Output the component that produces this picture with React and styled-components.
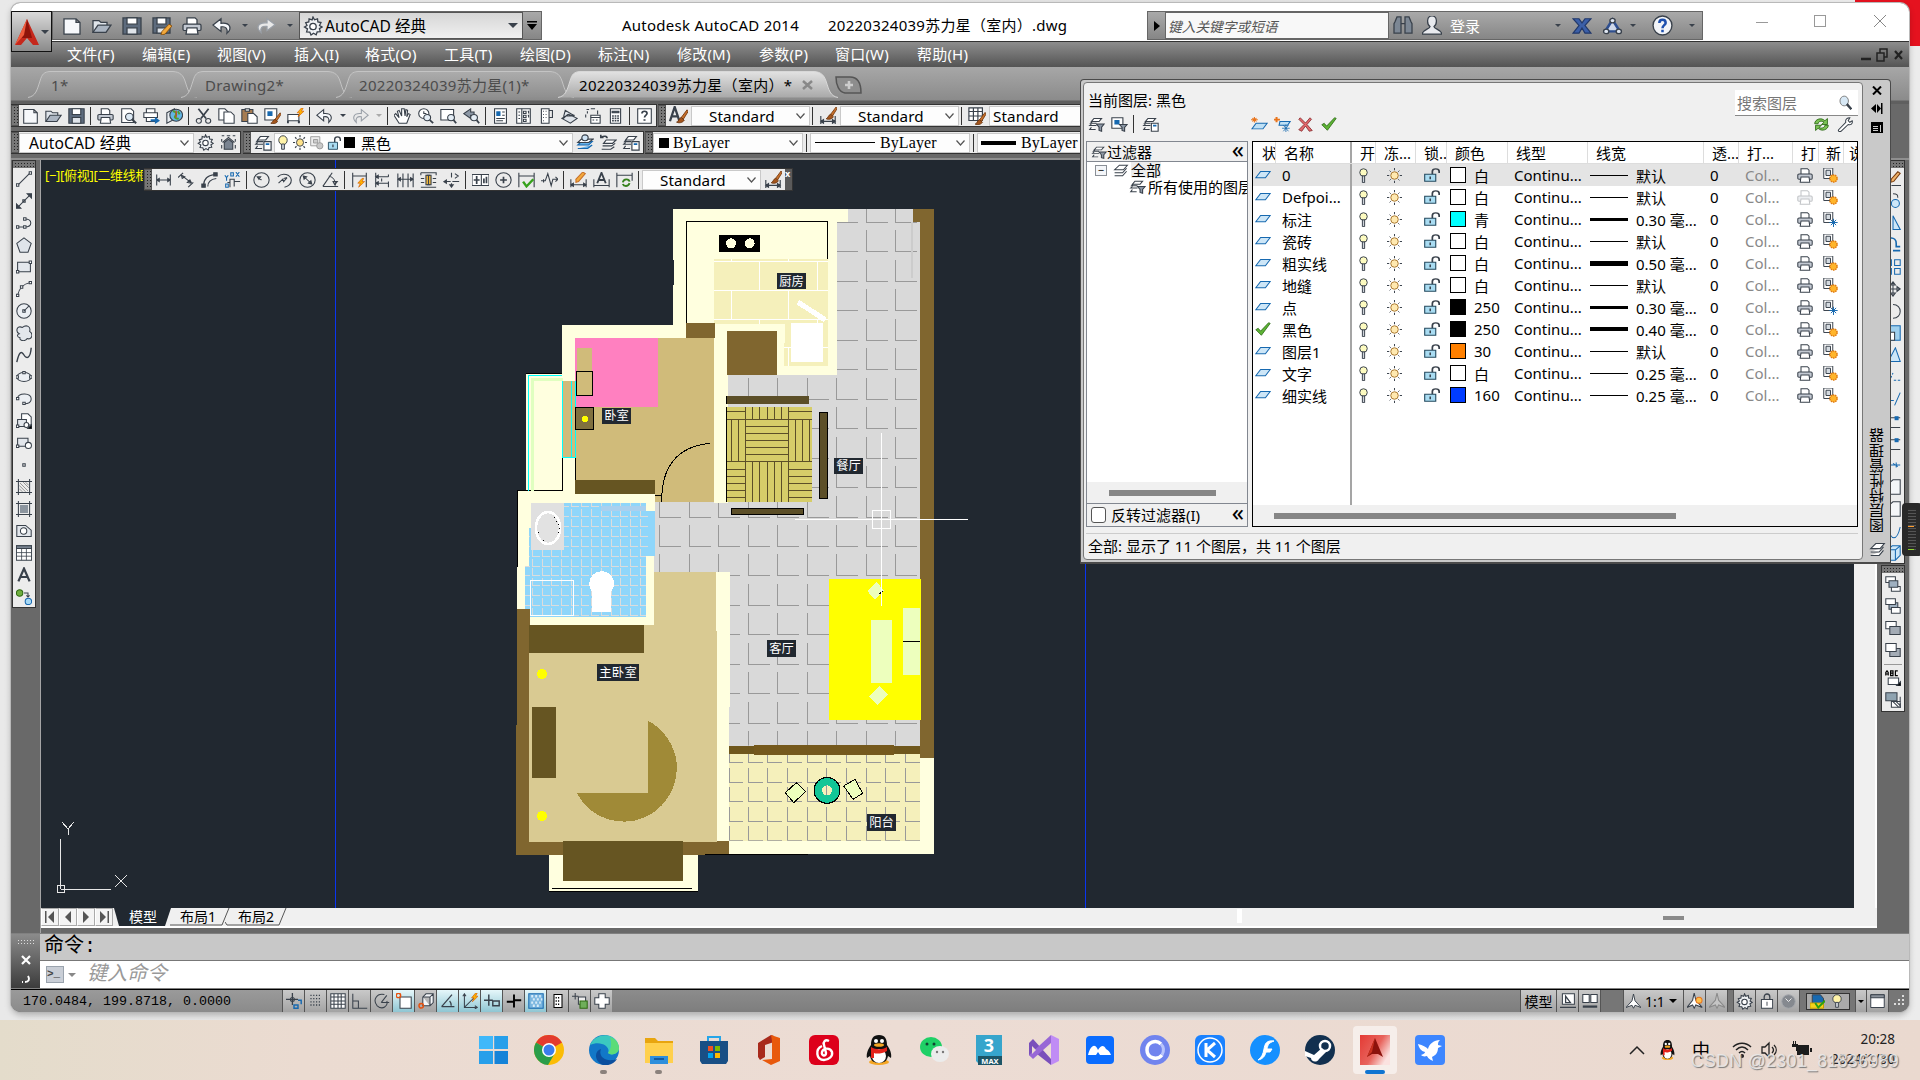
import React from 'react';
import styled, { createGlobalStyle, css } from 'styled-components';

const UI = '"Noto Sans","Noto Sans CJK SC",sans-serif';
const MONO = '"Liberation Mono","Noto Sans CJK SC",monospace';
const K = '#39414b';
const B = '#1769b0';

const Global = createGlobalStyle`
  * { box-sizing: border-box; }
  html, body { margin: 0; padding: 0; overflow: hidden; }
  body { font-family: ${UI}; font-size: 15px; color: #000; }
`;

/* ---------- icons ---------- */
const layersShape = (
  <>
    <path d="M7 3h9l-3 4H4zM4 10l-2 2h8M4 14l-2 3h7M5 7l-2 2h7" fill="#fff" />
  </>
);
const printer = (
  <>
    <path d="M5 8V1h8l2 2v5" fill="#fff" />
    <rect x="1" y="8" width="18" height="7" rx="1.5" fill="#c3c9d2" />
    <path d="M5 12h10l1 7H4z" fill="#fff" />
  </>
);
const dimTicks = <path d="M2 3v14M18 3v14M2 10h16M2 10l3-2v4zM18 10l-3-2v4z" />;
const brush = (
  <>
    <path d="M18 1l-6 8 2 2 5-8z" fill="#c8702a" stroke="#7a3e12" strokeWidth="1" />
    <path d="M12 9l3 3c-2 3-6 3-8 2 2 0 2-4 5-5z" fill="#a4551c" stroke="#6a3510" strokeWidth="1" />
  </>
);
const bolt = <path d="M13 1l-5 6h3l-2 5 7-7h-3l2-4z" fill="#ffb400" stroke="#d55b00" strokeWidth=".8" />;

const ICONS = {
  new: <path d="M2 2h12l4 4v13H2zM14 2v4h4" fill="#f6f8fb" />,
  open: <><path d="M1 17V4h6l2 2h6v4" fill="#dfe4ea" /><path d="M1 17l5-8h13l-5 8z" fill="#aab4c1" /></>,
  save: <><path d="M1 1h18v18H1z" fill="#5d6b7d" /><path d="M5 1h10v7H5z" fill="#fff" /><path d="M5 12h10v7H5z" fill="#dfe4ea" /></>,
  saveas: <><path d="M1 1h17v17H1z" fill="#5d6b7d" /><path d="M5 1h9v7H5z" fill="#fff" /><path d="M5 12h9v6H5z" fill="#dfe4ea" /><path d="M17 8l3 2-7 9-4 1 1-4z" fill="#f3a93b" stroke="#8a5312" strokeWidth="1" /></>,
  print: printer,
  preview: <><path d="M2 1h11l3 3v14H2z" fill="#fff" /><circle cx="11" cy="11" r="4.5" fill="#dce9f4" /><path d="M14 14l5 5" strokeWidth="2.4" /></>,
  publish: <><path d="M4 6V1h10v5M1 6h16v6H1zM4 12h11v5H4z" fill="#fff" /><path d="M9 14h5v-3l6 5-6 4v-3H9z" fill={B} stroke="none" /></>,
  globe: <><path d="M1 6l9-5v13l-9 5z" fill="#e9edf1" /><circle cx="12" cy="9" r="7.500" fill="#64b5e4" /><path d="M8 4c4 0 5 4 3 6s2 4 4 3M14 4l2 4" stroke="#4fa02f" strokeWidth="2.4" /><path d="M12 3v9" stroke="#d83b2a" /></>,
  cut: <><path d="M4 1l9 12M16 1L7 13" strokeWidth="2" /><circle cx="4.500" cy="16" r="3" /><circle cx="15.500" cy="16" r="3" /></>,
  copy: <><path d="M1 1h7l4 4v10H1z" fill="#fff" /><path d="M7 5h8l4 4v10H7z" fill="#fff" /></>,
  paste: <><path d="M1 2h13v15H1z" fill="#a67c52" /><path d="M5 1h5v3H5z" fill="#ddd" /><path d="M8 7h7l4 4v8H8z" fill="#fff" /></>,
  match: <><path d="M1 1h14v14H1z" fill="#fff" /><path d="M4 4h6v6H4z" fill={B} stroke="none" /><g transform="translate(1 5)">{brush}</g></>,
  blockedit: <><path d="M1 8h13v8H1z" fill="#fff" /><path d="M1 16v3M14 16v3" strokeWidth="2.4" /><g transform="translate(4 -1)">{bolt}</g></>,
  undo: <path d="M9 2L1 9l8 7v-5c5-1 7 2 6 7 5-5 4-12-6-11z" fill="#f6f8fb" />,
  redo: <path d="M11 2l8 7-8 7v-5c-5-1-7 2-6 7-5-5-4-12 6-11z" fill="#e9e9e9" stroke="#9aa0a8" />,
  hand: <path d="M6 12L2 7l-2 2 6 10h9l4-11-2-1-2 4 1-8-2-1-1 8-1-9H9v9L6 3 4 4z" fill="#fff" />,
  zoomrt: <><circle cx="8" cy="7" r="6" fill="#fff" /><path d="M8 4v3h3" /><circle cx="12" cy="12" r="4" fill="#e5eef6" /><path d="M15 15l4 4" strokeWidth="2.2" /></>,
  zoomwin: <><path d="M1 2h15v13H1z" fill="#fff" /><circle cx="13" cy="12" r="4" fill="#e5eef6" /><path d="M16 15l3 4" strokeWidth="2.2" /></>,
  zoomprev: <><path d="M9 1L1 7l8 6V9c3 0 4 1 4 1V5H9z" fill="#8d98a6" /><circle cx="13" cy="12" r="4" fill="#e5eef6" /><path d="M16 15l3 4" strokeWidth="2.2" /></>,
  props: <><path d="M3 1h14v18H3z" fill="#fff" /><path d="M5 4h5v6H5z" fill={B} stroke="none" /><path d="M12 5h3M12 9h3M5 13h10M5 16h8" /></>,
  dc: <><path d="M2 1h16v18H2z" fill="#fff" /><path d="M8 1v18M4 5h2M4 9h2M4 13h2M10 4h3v3h-3zM10 9h3v3h-3zM10 14h3v3h-3zM15 4h1v3M15 9h1v3" /></>,
  palette: <><path d="M4 1h9v18H4z" fill="#fff" /><path d="M13 3h4v9h-4M6 4h1M9 4h1M6 8h1M9 8h1M6 12h1M9 12h1M6 16h1" /></>,
  sheet: <path d="M1 13l10 6 8-6-10-5zM3 11l2-8 11 7M2 14l6-6M6 10l10-1" fill="#dfe4ea" />,
  markup: <><path d="M3 2h3M8 1h5M4 7V4M16 3v5M2 12V8" /><path d="M8 9h11v10H8z" fill="#fff" /><path d="M8 12h11M10 15h2M14 15h2" /></>,
  calc: <><path d="M4 1h12v18H4z" fill="#fff" /><path d="M6 4h8v2H6z" fill={K} /><path d="M6 10h2M9 10h2M12 10h2M6 13h2M9 13h2M12 13h2M6 16h2M9 16h2M12 16h2" strokeWidth="2" /></>,
  help: <><path d="M2 1h16v18H2z" fill="#fff" /><path d="M7 7c0-4 6-4 6 0 0 2-3 2-3 5" strokeWidth="2" /><path d="M10 14v2" strokeWidth="2.4" /></>,
  astyle: <><path d="M1 16L6 1l5 15M3 11h6" strokeWidth="2.4" /><g transform="translate(1 3)">{brush}</g></>,
  dimstyle: <><path d="M2 10v9M18 10v9M2 16h16M2 16l3-2v4zM18 16l-3-2v4z" /><g transform="translate(1 -1)">{brush}</g></>,
  tablestyle: <><path d="M1 1h15v14H1z" fill="#fff" /><path d="M1 5h15M1 10h15M6 1v14M11 1v14" /><g transform="translate(1 5)">{brush}</g></>,
  gear: <><path d="M10 1l1.500 2.800 3-1 .4 3.100 3.100.6-1.500 3L19 11l-2.600 1.600.9 3-3.100.2-1 3-2.700-1.600L8 19l-1.200-2.900-3.200-.2.9-3L1.500 11 4 9.500 2.700 6.600l3.100-.7.3-3 3 1z" fill="#eef1f4" /><circle cx="10" cy="10.500" r="3.200" fill="#fff" /></>,
  home: <><path d="M2 2h3M8 2h4M15 2h3M2 6v3M18 6v3M2 13v4M18 13v4" /><path d="M5 18v-8l5-4 5 4v8z" fill="#7a8491" /><path d="M3 10l7-6 7 6" /></>,
  layers: <>{layersShape}<path d="M11 9h8v10h-8z" fill="#fff" /><path d="M13 12h4" stroke={B} strokeWidth="2" /></>,
  laymake: <><path d="M6 9h12l-4 4H2zM2 17h11l5-4" fill="#69b2e8" stroke={B} /><path d="M6 6h13l-5 4H2z" fill="#fff" /><circle cx="10" cy="4.500" r="3.500" fill="#cfe3f4" /></>,
  layprev: <><path d="M8 7h11l-4 4H5zM4 14h10l4-3M3 18h10l4-3" fill="#fff" /><path d="M9 5c0-3-4-3-6-1M2 1v3h3" strokeWidth="1.800" /></>,
  layfilter: <>{layersShape}<path d="M10 10h9l-3 4v5l-3-1v-4z" fill="#8d98a6" /></>,
  laystate: <><path d="M1 1h13v14H1z" fill="#fff" /><path d="M4 4h6v6H4z" fill={B} stroke="none" /><path d="M10 10h9l-3 4v5l-3-1v-4z" fill="#8d98a6" /></>,
  bulb: <><circle cx="10" cy="7" r="6" fill="#fff3a8" /><path d="M8 12h4v7H8z" fill="#cfd4da" /></>,
  sun: <><circle cx="10" cy="10" r="5" fill="#ffe28a" /><path d="M10 0v3M10 17v3M0 10h3M17 10h3M3 3l2 2M15 15l2 2M17 3l-2 2M5 15l-2 2" strokeWidth="1.600" /></>,
  vpfreeze: <><path d="M1 1h13v13H1z" fill="#eee" stroke="#999" /><path d="M5 5h6v5H5z" fill="#ccc" stroke="#999" /><circle cx="14" cy="14" r="4.500" fill="#c8c8c8" stroke="#999" /></>,
  lock: <><path d="M11 9V5c0-5 8-5 8 0v2" strokeWidth="2" /><path d="M2 9h13v10H2z" fill="#a9dcf2" stroke="#24495e" /><path d="M8.500 12v4" strokeWidth="1.800" /></>,
  dlin: dimTicks,
  dali: <path d="M5 3l12 10M1 6l6-6M13 18l6-6M5 3l1 4 3-2zM17 13l-2-4-3 3z" transform="translate(-1 1)" />,
  darc: <><path d="M3 17C3 9 8 4 16 3M8 18c0-5 3-9 10-10" /><path d="M1 15h4v4H1zM15 1h4v4h-4z" fill={K} /></>,
  dord: <><path d="M7 19V9h5v9M12 12h7M7 13H4" /><path d="M1 4l2 3 2-3M3 7v4M14 0l4 6M18 0l-4 6M2 15h3v4H2zM8 1h3v4H8z" stroke={B} /></>,
  drad: <><circle cx="10" cy="10" r="9" /><path d="M10 10L5 6M5 6h4L7 9z" /></>,
  djog: <path d="M2 6c6-6 15-3 16 4 0 5-4 8-8 9M3 14l5-5 1 3 4-5M13 7l-4 1" />,
  ddia: <><circle cx="10" cy="10" r="9" /><path d="M5 5l10 10M5 5l4 1-3 3zM15 15l-4-1 3-3z" /></>,
  dang: <path d="M1 18h18M1 18L12 1M8 5c5 1 8 6 8 12M15 16l-2-4h5z" />,
  dquick: <><path d="M2 1v18M18 1v18M2 5h16" /><g transform="translate(0 7)">{bolt}</g></>,
  dbase: <path d="M2 1v18M9 8v4M17 3v3M17 12v7M2 6h15M2 14h15M2 6l3-2v4zM2 14l3-2v4z" />,
  dcont: <path d="M1 2v17M7 2v17M13 2v17M19 2v17M1 9h18M1 9l3-2v4zM19 9l-3-2v4z" />,
  dspace: <><path d="M1 1v3M1 1h18v3M1 19h18M1 8h4M15 8h4M1 13h4M15 13h4" /><path d="M7 4h6v12H7z" fill="#f6bb3c" /><path d="M10 4v12M8 4h4M8 16h4" /></>,
  dbreak: <path d="M10 1v6M10 14v5M1 12h8M11 12h8M1 12l3-2v4zM14 2l4 3-4 3M10 19l-2-3h4z" />,
  dtol: <><path d="M0 3h20v14H0zM11 3v14" fill="#fff" /><path d="M5.500 5v10M2 10h7M14 8v6M17 6v8" strokeWidth="2" /></>,
  dcenter: <><circle cx="10" cy="10" r="9" /><path d="M10 6v8M6 10h8" strokeWidth="2" /></>,
  dinsp: <><path d="M1 1v18M19 1v18M1 5h18" /><path d="M6 12l4 6 8-9" stroke="#36a21c" strokeWidth="2.800" /></>,
  djogl: <path d="M0 11h5l3-9 4 15 2-8h5M3 9v4M17 6l3 3-3 3" />,
  dedit: <><path d="M1 9v10M19 9v10M1 16h18M1 16l3-2v4zM19 16l-3-2v4z" /><path d="M15 0l3 2-8 10-3 1v-4z" fill="#f3a93b" stroke="#c8702a" /></>,
  dtedit: <><path d="M1 9v10M19 9v10M1 17h18" /><path d="M5 14l5-13 5 13M7 10h6" strokeWidth="2.200" /></>,
  dupd: <><path d="M1 1v18M19 1v10M1 4h18" /><path d="M8 13c1-5 7-5 8-1M16 14c-2 5-7 4-8 1" stroke="#36811c" strokeWidth="2.200" /></>,
  line: <><path d="M3 17L17 3" /><path d="M.500 16h3v3h-3zM16.500 1h3v3h-3z" fill="#fff" /></>,
  xline: <><path d="M3 17L17 3M8.500 8.500h3v3h-3z" /><path d="M0 13v6h6zM14 1h6v6z" fill={K} /></>,
  pline: <><path d="M2 15h9M11 5c10 0 10 10 0 10" /><path d="M.500 13.500h3v3h-3zM9.500 13.500h3v3h-3zM9.500 3.500h3v3h-3z" fill="#fff" /></>,
  polygon: <path d="M10 1l9 7-4 11H5L1 8z" fill="#dfe4ea" />,
  rect: <><path d="M2 4h16v12H2z" fill="#e3e7ec" /><path d="M.500 14.500h3v3h-3zM16.500 2.500h3v3h-3z" fill="#fff" /></>,
  arc: <><path d="M2 18C4 9 8 4 18 2" /><path d="M.500 16.500h3v3h-3zM5.500 6h3v3h-3zM16.500.500h3v3h-3z" fill="#fff" /></>,
  circle: <><circle cx="10" cy="10" r="9" fill="#eceff3" /><path d="M10 10l6-6M8.500 8.500h3v3h-3z" /></>,
  cloud: <path d="M4 11C-1 8 1 0 8 3c5-4 11-1 9 5 5 3 3 11-3 9-3 4-10 3-9-1-4-1-4-4-1-5z" fill="#e3e7ec" />,
  spline: <path d="M1 19C4 5 7 5 10 10s8 5 9-9" strokeWidth="1.800" />,
  ellipse: <><ellipse cx="10" cy="10" rx="9" ry="5.500" fill="#eceff3" /><path d="M0 8.500h3v3H0zM17 8.500h3v3h-3zM8.500 3h3v3h-3z" fill="#fff" /></>,
  earc: <><path d="M2 9c1-7 17-7 17 1 0 5-5 6-9 6" fill="#eceff3" /><path d="M.500 8h3v3h-3zM8.500 14h3v3h-3z" fill="#fff" /></>,
  insblk: <><path d="M7 1h8l4 4v10H7z" fill="#fff" /><path d="M2 8h11v9H2z" fill="#e3e7ec" /><circle cx="13" cy="15" r="3" fill="#fff" /><path d="M.500 15h3v3h-3z" fill="#fff" /><path d="M20 14v6h-6z" fill="#000" /></>,
  mkblk: <><path d="M2 4h13v10H2z" fill="#e3e7ec" /><circle cx="15.500" cy="13" r="3.800" fill="#fff" /><path d="M.500 12.500h3v3h-3z" fill="#fff" /></>,
  point: <path d="M8.500 8.500h3v3h-3z" />,
  hatch: <><path d="M3 0v20M17 0v20M0 3h20M0 17h20" /><path d="M4 8l8 8M4 12l4 4M5 5l10 10M9 4l7 7M12 4l4 4" strokeWidth=".9" stroke="#777" /></>,
  grad: <><path d="M3 0v20M17 0v20M0 3h20M0 17h20" /><path d="M5 5h10v10H5z" fill="#8c959f" stroke="none" /></>,
  region: <><path d="M1 3h11l7 6v8H1z" fill="#e3e7ec" /><circle cx="9.500" cy="10" r="4" fill="#fff" /></>,
  table: <><path d="M.500 1h19v18H.500z" fill="#fff" /><path d="M.500 1h19v3.500H.500z" fill="#7a8491" /><path d="M1 9.500h18M1 14h18M7 5v14M13 5v14" strokeWidth="1" /></>,
  mtext: <path d="M3 18L10 2l7 16M5.500 12.500h9" strokeWidth="2.800" />,
  addsel: <><circle cx="4.500" cy="5" r="4" fill="#6fae3f" stroke="#2f6a12" /><circle cx="15.500" cy="15.500" r="4" fill="#a6d8f5" stroke={B} /><path d="M10 5h5v4M13 8l2 2 2-2" /></>,
  front: <><path d="M1 1h12v7H1zM8 13h11v6H8z" fill="#fff" /><path d="M5 6h11v8H5z" fill="#9fb0c0" /></>,
  back: <><path d="M5 6h11v8H5z" fill="#9fb0c0" /><path d="M1 1h12v7H1zM8 12h11v7H8z" fill="#fff" /></>,
  above: <><path d="M1 2h13v9H1z" fill="#fff" /><path d="M6 8h13v10H6z" fill="#a3abb5" /></>,
  under: <><path d="M6 8h13v10H6z" fill="#a3abb5" /><path d="M1 2h13v10H1z" fill="#fff" /></>,
  abc: <><path d="M4 10h13v8H4z" fill="#fff" /><path d="M20 14v6h-6z" fill="#000" /><path d="M1 7V3l1.500-2L4 3v4M1 5h3M7 1v6h3V1zM7 4h3M16 1h-3v6h3" stroke="#000" strokeWidth="1.500" /></>,
  hatchback: <><path d="M8 12h11v7H8z" fill="#fff" /><path d="M10 12l7 7M14 12l5 5M19 6v6M19 14v6" /><path d="M1 1h14v10H1z" fill="#8fa3b0" /></>,
  laynew: <><path d="M6 9h13l-5 8H1z" fill="#bfe0f5" stroke={B} /><path d="M4 0v8M0 4h8M1.500 1.500l5 5M6.500 1.500l-5 5" stroke="#e8741c" /></>,
  laynewvp: <><path d="M7 6h12l-3 5H6z" fill="#bfe0f5" stroke={B} /><path d="M3 0v7M0 3.500h7" stroke="#e8741c" strokeWidth="2.400" /><path d="M14 10v10M9.500 15h9M11 11l6 8M17 11l-6 8" stroke={B} strokeWidth="1" /></>,
  del: <path d="M3 1l7 7 6-7 2 2-6 7 7 8-4 1-5-7-5 7-4-2 7-7-7-7z" fill="#e2686c" stroke="#7d2023" strokeWidth="1" />,
  check: <path d="M1 11l3-2 3 4L17 1l2 1L8 19z" fill="#5eb336" stroke="#23610c" strokeWidth="1" />,
  refresh: <><path d="M2 9c0-6 8-9 12-4l3-3v8h-7l3-3c-3-3-7-1-7 2z" fill="#7cc356" stroke="#23610c" strokeWidth="1" /><path d="M18 11c0 6-8 9-12 4l-3 3v-7h7l-3 3c3 2 7 0 7-3z" fill="#7cc356" stroke="#23610c" strokeWidth="1" /></>,
  wrench: <path d="M2 17l9-10c-1-4 2-6 5-6l-2 4 2 2 3-2c1 4-2 6-5 5L5 19c-2 1-4 0-3-2z" fill="#fff" />,
  loupe: <><circle cx="8" cy="8" r="6.500" fill="#d7e8f5" stroke="#777" /><path d="M12 12l7 7" strokeWidth="3.400" /></>,
  layer: <path d="M7 5h12l-6 9H1z" fill="#cde6f7" stroke={B} strokeWidth="1.300" />,
  tbulb: <><circle cx="10" cy="6" r="5" fill="#fdfbc0" /><path d="M8.500 10.500h3v9h-3z" fill="#cfd4da" /></>,
  tsun: <><circle cx="10" cy="10" r="5" fill="#ffe9b0" stroke="#a9762d" /><path d="M10 0v3M10 17v3M0 10h3M17 10h3M3.500 3.500L5 5M15 15l1.500 1.500M16.500 3.500L15 5M5 15l-1.500 1.500" /></>,
  vpthaw: <><path d="M1 0h12v14H1z" fill="#fff" /><path d="M4 3h6v7H4z" fill="#d4dae0" /><circle cx="14" cy="14" r="4.800" fill="#ffb52b" stroke="#e07a10" strokeDasharray="2 1" strokeWidth="2" /></>,
  vpfrz: <><path d="M1 0h12v14H1z" fill="#fff" /><path d="M4 3h6v7H4z" fill="#d4dae0" /><path d="M14 9v11M8.500 14h11M10.500 10.500l7 7M17.500 10.500l-7 7" stroke={B} /></>,
  stack: <path d="M8 3h10l-5 6H2zM2 13h10l5-6M2 17h10l5-6" fill="#fff" />,
  erase: <><path d="M16 1l3 2-8 10-4 1 1-4z" fill="#f0b36a" stroke="#7a3e12" /><path d="M8 18h12" /></>,
  mcopy: <><circle cx="13" cy="13" r="5" fill="#cde6f7" stroke={B} /><path d="M10 1c5 0 6 1 6 5" /></>,
  mirror: <path d="M10 1v17h9z" fill="#cde6f7" stroke={B} />,
  offset: <path d="M2 8c0-9 12-9 12 0v4h5M10 17h9" stroke={B} strokeWidth="2" />,
  array: <path d="M3 1h5v7H3zM12 1h7v7h-7zM3 12h5v7H3zM12 12h7v7h-7z" stroke={B} />,
  move: <path d="M10 1v18M1 10h18M10 1L7 5h6zM10 19l-3-4h6zM19 10l-4-3v6z" />,
  rotate: <path d="M10 2c12 0 12 17 0 17" />,
  scale: <><path d="M4 1h15v18H4z" fill="#9fd0ee" stroke={B} /><path d="M4 9h8v10H4z" fill="#fff" /></>,
  stretch: <path d="M4 18L13 1l6 17z" fill="#cde6f7" stroke={B} />,
  trim: <path d="M5 16l5-11M11 14h8" stroke={B} strokeDasharray="3 2" />,
  extend: <path d="M5 12h6M12 18l7-16" stroke={B} />,
  brk: <><path d="M3 6h16M5 18h14" /><path d="M12 4h5v5h-5z" fill={B} stroke="none" /></>,
  join: <path d="M3 10h16M14 7v6M10 8l6 4" stroke={B} />,
  chamfer: <path d="M4 19V6l6-5h9v18z" fill="#f4f6f8" />,
  blend: <path d="M4 5c3 18 11 18 15 0" stroke={B} />,
  explode: <path d="M3 6l6-5h10v12l-6 6H3zM3 6h10v13M13 6l6-5" stroke={B} fill="#cde6f7" />,
  infer: <><path d="M8 0v15M0 8h15" strokeWidth="1.600" /><circle cx="8" cy="8" r="2.500" /><path d="M15 9h4v5M10 15h5v4h-5z" stroke={B} strokeWidth="1.800" /></>,
  snap: <path d="M3 3h14M3 7h14M3 11h14M3 15h14" strokeDasharray="1.500 2" strokeWidth="1.600" />,
  grid: <path d="M1 1h18v18H1zM1 5h18M1 10h18M1 14h18M5 1v18M10 1v18M14 1v18" fill="#fff" />,
  ortho: <path d="M1 1v18h18M1 10h7v9" />,
  polar: <path d="M13 2c-10-2-15 7-9 14 7 6 14 0 12-6M9 12h10M9 12l7-9" />,
  osnap: <><path d="M5 5h14v14H5z" fill="#fff" /><circle cx="3" cy="3" r="2.800" stroke="#e8500c" strokeWidth="1.800" /></>,
  osnap3d: <><path d="M6 5l4-4h9v11l-4 4H6zM15 16V5H6M15 5l4-4" fill="#f4f6f8" /><circle cx="4" cy="16" r="2.800" stroke="#e8500c" strokeWidth="1.800" /></>,
  otrack: <path d="M2 17h16M2 17L15 2M12 10c2 2 2 4 2 6" strokeWidth="1.600" />,
  ducs: <><path d="M3 1v17h16M3 18L16 5M1 4l2-3 2 3M16 16l3 2-3 2" /><g transform="translate(4 -1)">{bolt}</g></>,
  dyn: <path d="M6 2v14M0 9h11M11 10h8v6h-8z" strokeWidth="1.800" />,
  lwt: <path d="M10 2v16M11 9h8M1 11h9" strokeWidth="2.400" stroke="#000" />,
  tpy: <><path d="M1 1h18v18H1z" fill="#7ab6df" stroke={B} /><path d="M4 4h12M6 8h12M4 12h12M6 16h10" stroke="#d8ecf8" strokeWidth="3" strokeDasharray="2.500 2.500" /></>,
  qp: <><path d="M5 2h10v16H5z" fill="#fff" stroke="#000" /><path d="M7 6h6M7 10h6M7 14h6" stroke="#000" strokeDasharray="1.500 1.500" strokeWidth="1.800" /></>,
  sc: <><path d="M4 0v8M0 4h8M8 5h9v9H8z" fill="#eee" /><path d="M10 10h9v9h-9z" fill="#6fae5a" stroke="#2f6a12" /></>,
  am: <path d="M6 1h8v5h5v8h-5v5H6v-5H1V6h5z" fill="#fff" />,
  qview: <><path d="M3 1h15v13H3z" fill="#fff" /><path d="M7 4v8h6zM0 18h20" strokeWidth="1.600" /></>,
  qlay: <><path d="M1 2h8v10H1zM11 2h8v10h-8z" fill="#fff" /><path d="M1 17h18" strokeWidth="2.800" /></>,
  anno: <path d="M10 0l2 9 8 9-8-3-2 4-2-4-8 3 8-9z" fill="#fff" />,
  annovis: <><path d="M9 0l2 9 8 9-8-3-2 4-2-4-7 3 7-9z" fill="#fff" /><circle cx="15" cy="9" r="3.800" fill="#ffc04a" stroke="#e8741c" /></>,
  annoauto: <path d="M10 0l2 9 8 9-8-3-2 4-2-4-8 3 8-9z" fill="#c5c5c5" stroke="#8a8a8a" />,
  padlock: <><path d="M6 9V5c0-5 8-5 8 0v4" strokeWidth="1.800" /><path d="M2 8h16v11H2z" fill="#fff" /><path d="M10 11v5" /></>,
  perf: <><circle cx="10" cy="10" r="9" fill="#85898f" stroke="#a4a7ac" /><path d="M6 6l4 4 4-4" stroke="#eee" /></>,
  iso: <><path d="M3 1h11l4 5v9H3z" fill={B} /><path d="M0 12h18v7H0z" fill="#f5d21c" stroke="#c49c00" /><path d="M7 12l4 6 9-9" stroke="#2ca012" strokeWidth="2.600" /></>,
  clean: <><path d="M1 1h18v17H1z" fill="#fff" /><path d="M1 1h18v4H1z" fill="#8b929b" /></>,
  binoc: <path d="M2 6l2-5h4v17H1V8zM18 6l-2-5h-4v17h7V8zM8 8h4" fill="#7c8794" />,
  user: <path d="M10 0c6 0 5 9 2 11 0 3 6 2 8 8H0c2-6 8-5 8-8C5 9 4 0 10 0z" fill="#e8eaee" />,
  xch: <path d="M1 2h6l3 5 3-5h6l-6 8 6 9h-6l-3-6-3 6H1l6-9z" fill="#3b5fa8" stroke="#22396b" />,
  a360: <><path d="M10 3l7 13H3z" stroke="#2f4f8f" strokeWidth="2.600" fill="#cfd8ea" /><circle cx="10" cy="4" r="2.500" fill="#dfe6f2" /><circle cx="4" cy="16" r="2.500" fill="#dfe6f2" /><circle cx="16" cy="16" r="2.500" fill="#dfe6f2" /></>,
  qhelp: <><circle cx="10" cy="10" r="9" fill="#f2f4f8" /><path d="M7 7.500c0-4 6-4 6 0 0 2-3 2.500-3 5M10 14v2.500" stroke="#1d4fae" strokeWidth="2.400" /></>,
};

const Svg = styled.svg`
  flex: none;
  display: block;
  width: ${(p) => p.$w}px;
  height: ${(p) => p.$h || p.$w}px;
  opacity: ${(p) => p.$o || 1};
`;
const Icon = ({ n, s = 18, h, dim }) => (
  <Svg $w={s} $h={h} $o={dim ? 0.3 : 1} viewBox="0 0 20 20" preserveAspectRatio="none" fill="none" stroke={K} strokeWidth="1.300">
    {ICONS[n]}
  </Svg>
);

/* ---------- shared pieces ---------- */
const Desktop = styled.div`
  position: relative;
  width: 1920px;
  height: 1080px;
  overflow: hidden;
  display: flex;
  flex-direction: column;
  background: linear-gradient(90deg, #e9e9e9 0, #e2e2e2 1200px, #ececec);
`;
const RedCorner = styled.div`
  position: absolute;
  right: 0;
  top: 0;
  width: 65px;
  height: 46px;
  background: #e5121f;
`;
const Win = styled.div`
  position: relative;
  width: 1898px;
  height: 1009px;
  margin: 3px 0 8px 11px;
  flex: none;
  border-radius: 9px 9px 10px 10px;
  box-shadow: 0 0 0 1px #b9b9b9, 0 3px 6px rgba(0, 0, 0, 0.25);
  overflow: hidden;
  display: flex;
  flex-direction: column;
  background: #696969;
`;
const Slot = styled.div`
  flex: none;
  width: ${(p) => p.$w || 23}px;
  height: 100%;
  display: flex;
  align-items: center;
  justify-content: center;
`;
const Arrow = styled.i`
  flex: none;
  width: 0;
  height: 0;
  border: ${(p) => p.$s || 4}px solid transparent;
  border-bottom: 0;
  border-top-color: ${(p) => p.$c || '#39414b'};
  margin: 0 ${(p) => p.$m || 0}px;
`;
const Gap = styled.div`
  flex: ${(p) => (p.$w ? 'none' : '1')};
  width: ${(p) => p.$w || 0}px;
`;

/* ---------- title ---------- */
const Title = styled.div`
  flex: none;
  height: 39px;
  padding: 8px 0 0 41px;
  display: flex;
  background: #fff;
  border-bottom: 1px solid #333;
`;
const chromeBar = css`
  height: 29px;
  flex: none;
  display: flex;
  align-items: center;
  border: 1px solid #666;
  background: linear-gradient(#a9a9a9, #868686);
`;
const Quick = styled.div`
  ${chromeBar}
  width: 490px;
  padding-left: 4px;
`;
const Workspace = styled.div`
  width: 224px;
  height: 27px;
  display: flex;
  align-items: center;
  padding: 0 4px 0 3px;
  gap: 2px;
  border: 1px solid #555;
  background: linear-gradient(#d6d6d6, #f0f0f0);
  font-size: 15.600px;
`;
const Caption = styled.div`
  font-size: 15px;
  line-height: 29px;
  letter-spacing: 0.250px;
  white-space: pre;
  margin-left: ${(p) => p.$x}px;
  width: ${(p) => p.$w}px;
  flex: none;
`;
const InfoBar = styled.div`
  ${chromeBar}
  width: 556px;
`;
const Search = styled.div`
  width: 224px;
  height: 27px;
  background: #f8f8f8;
  border: 1px solid #666;
  padding-left: 2px;
  line-height: 27px;
  font-style: italic;
  font-size: 13.700px;
  color: #555;
`;
const Login = styled.span`
  color: #fff;
  width: 103px;
  padding-left: 3px;
`;
const Caps = styled.div`
  display: flex;
  gap: 46px;
  margin: 2px 0 0 53px;
  height: 15px;
`;
const AppButton = styled.div`
  position: absolute;
  left: 0;
  top: 8px;
  width: 41px;
  height: 41px;
  border: 1px solid #111;
  background: linear-gradient(#d9d9d9, #8b8b8b);
  display: flex;
  align-items: center;
  padding-left: 3px;
`;

/* ---------- menu ---------- */
const Menu = styled.div`
  flex: none;
  height: 25px;
  display: flex;
  align-items: center;
  padding-left: 56px;
  color: #fff;
  background: linear-gradient(#8d8d8d, #545454);
`;
const MenuItem = styled.div`
  width: ${(p) => p.$w}px;
  line-height: 25px;
  letter-spacing: 0.2px;
`;

/* ---------- file tabs ---------- */
const Tabs = styled.div`
  flex: none;
  height: 37px;
  padding: 4px 0 0 17px;
  display: flex;
  align-items: flex-start;
  background: linear-gradient(#a7a7a7, #8b8b8b 33px, #5f5f5f 34px);
`;
const Tab = styled.div`
  display: grid;
  width: ${(p) => p.$w}px;
  height: 27px;
  margin-right: -16px;
  flex: none;
  & > * { grid-area: 1 / 1; }
`;
const TabLabel = styled.div`
  padding-left: ${(p) => p.$p}px;
  line-height: 26px;
  letter-spacing: 0.3px;
  color: ${(p) => (p.$on ? '#000' : '#4c4c4c')};
  display: flex;
  align-items: center;
  gap: 10px;
  white-space: nowrap;
`;
const FileTab = ({ w, on, p = 23, children }) => (
  <Tab $w={w}>
    <svg width={w} height="27" fill="none">
      <defs>
        <linearGradient id={on ? 'tOn' : 'tOff'} x1="0" x2="0" y1="0" y2="1">
          <stop offset="0" stopColor={on ? '#e2e2e2' : '#acacac'} />
          <stop offset="1" stopColor={on ? '#a9a9a9' : '#8f8f8f'} />
        </linearGradient>
      </defs>
      <path
        d={`M0 26.500C8 25 9 19 12 10 14 3 16 1 22 .500H${w - 24}C${w - 17} 1 ${w - 14} 4 ${w - 12} 10C${w - 9} 19 ${w - 8} 25 ${w} 26.500`}
        fill={on ? 'url(#tOn)' : 'url(#tOff)'}
        stroke={on ? '#d8d8d8' : '#c4c4c4'}
      />
    </svg>
    <TabLabel $p={p} $on={on}>{children}</TabLabel>
  </Tab>
);

/* ---------- toolbars ---------- */
const ToolRows = styled.div`
  flex: none;
  height: 56px;
  display: flex;
  flex-direction: column;
  gap: 4px;
  padding-bottom: 2px;
  background: #696969;
  border-bottom: 2px solid #8f8f8f;
`;
const ToolRow = styled.div`
  display: flex;
  height: 23px;
`;
const Bar = styled.div`
  display: flex;
  align-items: center;
  height: 23px;
  width: ${(p) => p.$w}px;
  flex: none;
  overflow: hidden;
  background: #ebebeb;
  border: 1px solid #333;
  border-left: 0;
`;
const Grip = styled.div`
  flex: none;
  width: 8px;
  height: 100%;
  background: radial-gradient(circle, #222 0.8px, transparent 1px) 1px 3px / 3px 3px, #777;
  border: 1px solid #555;
`;
const Sep = styled.div`
  flex: none;
  width: 1px;
  height: 18px;
  margin: 0 ${(p) => p.$r || 3}px 0 ${(p) => p.$l || 2}px;
  background: #333;
`;
const Combo = styled.div`
  flex: none;
  display: flex;
  align-items: center;
  gap: ${(p) => p.$g || 5}px;
  width: ${(p) => p.$w}px;
  height: 20px;
  background: #fdfdfd;
  border: 1px solid #c9c9c9;
  padding-left: ${(p) => p.$p}px;
  padding-right: 4px;
  font-size: ${(p) => p.$fs || 15}px;
  font-family: ${(p) => (p.$serif ? '"Liberation Serif",serif' : UI)};
  line-height: 18px;
  white-space: nowrap;
  letter-spacing: 0.1px;
`;
const Swatch = styled.span`
  flex: none;
  width: ${(p) => p.$s || 10}px;
  height: ${(p) => p.$s || 10}px;
  background: ${(p) => p.$c || '#000'};
  border: 1px solid #000;
`;
const Stroke = styled.span`
  flex: none;
  width: ${(p) => p.$w}px;
  height: ${(p) => p.$h}px;
  background: #000;
`;
const Chev = () => (
  <svg width="9" height="6" fill="none" stroke="#555" strokeWidth="1.200"><path d="M.500.500l4 4.500 4-4.500" /></svg>
);
const items = (list) =>
  list.map((n, i) => {
    if (n === '|') return <Sep key={i} />;
    if (n === 'v') return <Slot key={i} $w={13}><Arrow $s={3} $c={i > 17 ? '#aaa' : '#39414b'} /></Slot>;
    return <Slot key={i}><Icon n={n} s={17} h={16} /></Slot>;
  });

/* ---------- work area ---------- */
const Work = styled.div`
  flex: none;
  height: 773px;
  display: flex;
  background: #696969;
`;
const LeftDock = styled.div`
  width: 30px;
  padding: 0 0 0 1px;
  border-right: 1px solid #a5a5a5;
`;
const VBar = styled.div`
  width: 24px;
  height: ${(p) => p.$h}px;
  flex: none;
  overflow: hidden;
  display: flex;
  flex-direction: column;
  align-items: center;
  background: #ececec;
  border: 1px solid #333;
`;
const VGrip = styled.div`
  width: 100%;
  flex: none;
  height: 7px;
  background: radial-gradient(circle, #222 0.8px, transparent 1px) 1px 1px / 3px 3px, #777;
`;
const VSlot = styled.div`
  height: 22px;
  flex: none;
  display: flex;
  align-items: center;
`;
const VSep = styled.div`
  width: 18px;
  height: 1px;
  flex: none;
  margin: 3px 0 2px;
  background: #999;
`;
const Center = styled.div`
  width: 1836px;
  display: flex;
  flex-direction: column;
`;
const CanvasRow = styled.div`
  display: flex;
  height: 748px;
  flex: none;
`;
const Canvas = styled.div`
  position: relative;
  width: 1813px;
  height: 748px;
  background: #212830;
  & > svg { display: block; }
`;
const ViewLabel = styled.div`
  position: absolute;
  left: 4px;
  top: 5px;
  width: 98px;
  overflow: hidden;
  white-space: nowrap;
  color: #ff0;
  font-size: 13px;
  letter-spacing: -0.3px;
  line-height: 20px;
`;
const FloatBar = styled.div`
  position: absolute;
  left: 103px;
  top: 8px;
`;
const CloseNub = styled.div`
  width: 8px;
  height: 100%;
  margin-left: auto;
  background: #5a5a5a;
  color: #fff;
  font: bold 9px/10px ${UI};
`;
const VScroll = styled.div`
  width: 23px;
  background: #f0f0f0;
  border-right: 2px solid #fff;
`;
const RightDock = styled.div`
  width: 32px;
  padding-left: 4px;
  display: flex;
  flex-direction: column;
  gap: 1px;
`;
const LayoutTabs = styled.div`
  height: 20px;
  flex: none;
  display: flex;
  background: #f0f0f0;
  border-bottom: 2px solid #fff;
  font-size: 14px;
  line-height: 18px;
`;
const NavBtn = styled.div`
  width: 18px;
  height: 18px;
  border: 1px solid #aaa;
  border-left-color: #fff;
  background: #f4f4f4;
  display: flex;
  align-items: center;
  justify-content: center;
`;
const LTab = styled.div`
  display: grid;
  width: ${(p) => p.$w}px;
  margin-right: -6px;
  & > * { grid-area: 1 / 1; }
`;
const LText = styled.span`
  padding-left: ${(p) => p.$p || 15}px;
  color: ${(p) => (p.$on ? '#fff' : '#000')};
`;
const Splitter = styled.div`
  width: 5px;
  height: 14px;
  margin: 1px 0 0 auto;
  background: #fff;
`;
const HThumb = styled.div`
  width: 21px;
  height: 4px;
  margin: 8px 193px 0 421px;
  background: #8a8a8a;
`;

/* ---------- command line and status ---------- */
const Command = styled.div`
  flex: none;
  height: 56px;
  display: flex;
  border-top: 1px solid #808080;
  border-bottom: 1px solid #808080;
`;
const CmdGrip = styled.div`
  width: 29px;
  background: linear-gradient(#8b8b8b, #3c3c3c);
  color: #fff;
  display: flex;
  flex-direction: column;
  align-items: center;
  gap: 10px;
  padding: 5px 0 0;
`;
const Dots = styled.div`
  width: 18px;
  height: 6px;
  background: radial-gradient(circle, #ddd 0.9px, transparent 1px) 0 0 / 3px 3px;
`;
const CmdBody = styled.div`
  flex: 1;
  font-family: ${MONO};
  font-size: 20px;
`;
const CmdHist = styled.div`
  height: 27px;
  line-height: 25px;
  padding-left: 4px;
  background: #c8c8c8;
  border-bottom: 1px solid #777;
`;
const CmdInput = styled.div`
  height: 27px;
  background: #fff;
  display: flex;
  align-items: center;
  padding-left: 6px;
  font-style: italic;
  color: #999;
  line-height: 26px;
`;
const Prompt = styled.span`
  width: 18px;
  height: 17px;
  border: 1px solid #9aa3ad;
  background: #c9ced6;
  font: bold 11px/14px ${MONO};
  color: #444;
`;
const Status = styled.div`
  flex: none;
  height: 24px;
  display: flex;
  border-top: 1px solid #000;
  background: linear-gradient(#8c8c8c, #7d7d7d);
`;
const Coords = styled.div`
  width: 271px;
  padding-left: 12px;
  font: 13.330px/23px ${MONO};
  white-space: pre;
  background: linear-gradient(#9a9a9a, #8a8a8a);
`;
const SBtn = styled.div`
  width: ${(p) => p.$w || 22}px;
  height: 22px;
  flex: none;
  display: flex;
  align-items: center;
  justify-content: center;
  border-left: 1px solid #555;
  font-size: 14px;
  background: ${(p) => (p.$on ? 'linear-gradient(#e6f7fa, #8fc6d3)' : p.$dark ? '#767676' : 'linear-gradient(#c9c9c9, #a3a3a3)')};
`;
const Inset = styled.div`
  display: flex;
  width: 44px;
  height: 17px;
  align-items: center;
  gap: 5px;
  padding-left: 3px;
  border: 1px solid #333;
  background: #aaa;
`;

/* ---------- layer palette ---------- */
const Palette = styled.div`
  position: absolute;
  left: 1080px;
  top: 79px;
  width: 811px;
  height: 485px;
  display: flex;
  background: #c9c9c9;
  border: 1px solid #4a4a4a;
  border-bottom-width: 2px;
  border-radius: 4px 4px 0 0;
  padding: 2px 0 2px 2px;
`;
const PBody = styled.div`
  width: 780px;
  border: 1px solid #777;
  border-radius: 4px;
  background: #f0f0f0;
  display: flex;
  flex-direction: column;
  padding: 0 4px 0 2px;
  overflow: hidden;
`;
const PHead = styled.div`
  display: flex;
  flex: none;
  height: 28px;
  padding: 6px 0 0 2px;
  justify-content: space-between;
  line-height: 22px;
`;
const PSearch = styled.div`
  width: 123px;
  height: 26px;
  margin-top: 1px;
  background: #fff;
  border-bottom: 1px solid #888;
  display: flex;
  align-items: center;
  justify-content: space-between;
  padding: 0 6px 0 2px;
  color: #777;
`;
const PTools = styled.div`
  display: flex;
  flex: none;
  height: 30px;
  align-items: center;
  padding: 0 0 4px;
`;
const PMain = styled.div`
  display: flex;
  flex: none;
  gap: 4px;
  height: 386px;
`;
const Filters = styled.div`
  width: 162px;
  border: 1px solid #828790;
  display: flex;
  flex-direction: column;
  flex: none;
`;
const FHead = styled.div`
  height: ${(p) => p.$h}px;
  flex: none;
  display: flex;
  align-items: center;
  padding: 0 3px 0 4px;
  gap: ${(p) => p.$g || 0}px;
  line-height: 20px;
  border-bottom: ${(p) => p.$b || 0}px solid #828790;
`;
const Dbl = styled.span`
  margin-left: auto;
  font-size: 24px;
  line-height: 14px;
  padding-bottom: 6px;
`;
const Tree = styled.div`
  background: #fff;
  flex: 1;
  padding: 0 0 0 8px;
  overflow: hidden;
`;
const TreeRow = styled.div`
  display: flex;
  align-items: center;
  height: 16px;
  white-space: nowrap;
  padding-left: ${(p) => p.$x || 0}px;
  gap: 2px;
`;
const Picked = styled.span`
  background: #ececec;
  line-height: 16px;
`;
const Box = styled.span`
  width: 12px;
  height: 11px;
  border: 1px solid #8a8f96;
  background: #f4f6f9;
  font: 11px/8px ${UI};
  text-align: center;
`;
const FScroll = styled.div`
  height: ${(p) => p.$h}px;
  flex: none;
  background: #f0f0f0;
  border-bottom: ${(p) => p.$b || 0}px solid #828790;
  display: flex;
  align-items: center;
  padding-left: ${(p) => p.$x}px;
`;
const Thumb = styled.div`
  width: ${(p) => p.$w}px;
  height: 6px;
  background: #868686;
`;
const Check = styled.span`
  width: 15px;
  height: 16px;
  border: 1px solid #555;
  border-radius: 3px;
  background: #fff;
`;
const Grid = styled.div`
  width: 608px;
  border: 1px solid #000;
  background: #fff;
  overflow: hidden;
  display: flex;
  flex-direction: column;
`;
const cols = '23px 76px 24px 40px 31px 61px 80px 116px 35px 54px 26px 25px 17px';
const HRow = styled.div`
  display: grid;
  grid-template-columns: ${cols};
  height: 22px;
  flex: none;
  border-bottom: 1px solid #ddd;
`;
const HCell = styled.div`
  border-right: ${(p) => (p.$split ? '2px solid #a5a5a5' : '1px solid #ddd')};
  padding-left: ${(p) => p.$p || 8}px;
  overflow: hidden;
  white-space: nowrap;
  line-height: 23px;
`;
const LRow = styled.div`
  display: grid;
  grid-template-columns: ${cols};
  height: 22px;
  flex: none;
  background: ${(p) => (p.$hi ? '#e4e4e4' : '#fff')};
`;
const LCell = styled.div`
  display: flex;
  align-items: center;
  overflow: hidden;
  white-space: nowrap;
  padding-left: ${(p) => p.$p || 0}px;
  gap: ${(p) => p.$g || 0}px;
  border-right: ${(p) => (p.$split ? '2px solid #a5a5a5' : '0')};
  color: ${(p) => p.$c || '#000'};
`;
const Filler = styled.div`
  flex: 1;
  width: 99px;
  border-right: 2px solid #a5a5a5;
`;
const PFoot = styled.div`
  margin: 6px 0 0;
  border-top: 1px solid #ccc;
  height: 25px;
  line-height: 24px;
  padding-left: 2px;
`;
const PSide = styled.div`
  flex: 1;
  display: flex;
  flex-direction: column;
  align-items: center;
  padding: 4px 0 2px 1px;
  gap: 8px;
`;
const VTitle = styled.div`
  margin-top: auto;
  writing-mode: vertical-rl;
  transform: rotate(180deg);
  font-size: 15px;
  line-height: 16px;
`;
const Gadget = styled.div`
  position: absolute;
  left: 1902px;
  top: 503px;
  width: 20px;
  height: 53px;
  border-radius: 4px;
  background: repeating-linear-gradient(#2b2b2b 0 2px, #555 2px 3px) 6px 5px / 8px 42px no-repeat, #292929;
  padding: 23px 6px 0;
  &::before { content: ''; display: block; width: 6px; height: 1px; background: #ff9d2e; }
  &::after { content: ''; display: block; width: 6px; height: 1px; margin-top: 22px; background: #8fd62e; }
`;

/* ---------- taskbar ---------- */
const Taskbar = styled.div`
  position: relative;
  flex: none;
  height: 60px;
  display: flex;
  background: linear-gradient(90deg, #e4dccb, #ebdbd1 300px, #ecdcd4 900px, #ead9cf);
`;
const Apps = styled.div`
  display: flex;
  padding-left: 466px;
`;
const AppSlot = styled.div`
  width: 55.100px;
  height: 60px;
  display: flex;
  flex-direction: column;
  align-items: center;
  justify-content: center;
  position: relative;
`;
const AppGlow = styled.div`
  width: 44px;
  height: 48px;
  border-radius: 4px;
  display: flex;
  align-items: center;
  justify-content: center;
  background: ${(p) => (p.$on ? '#f6eeea' : 'transparent')};
`;
const Dot = styled.i`
  position: absolute;
  bottom: 6px;
  width: ${(p) => p.$w}px;
  height: 4px;
  border-radius: 2px;
  background: ${(p) => p.$c};
`;
const Tray = styled.div`
  display: flex;
  position: absolute;
  left: 1628px;
  top: 18px;
  align-items: center;
  height: 24px;
`;
const TraySlot = styled.div`
  width: ${(p) => p.$w}px;
  height: 24px;
  display: flex;
  align-items: center;
  font-size: 18px;
  line-height: 24px;
`;
const Clock = styled.div`
  position: absolute;
  right: 25px;
  top: 9px;
  text-align: right;
  font-size: 13.500px;
  line-height: 20px;
  color: #222;
`;
const Watermark = styled.div`
  position: absolute;
  left: 1691px;
  top: 31px;
  font: 17.500px/20px "Liberation Sans", sans-serif;
  letter-spacing: 0.5px;
  color: rgba(235, 235, 235, 0.85);
  text-shadow: 1px 1px 1px #777;
  white-space: nowrap;
`;

/* ---------- floor plan ---------- */
const R = (x1, y1, x2, y2, f, extra) => <rect x={x1} y={y1} width={x2 - x1} height={y2 - y1} fill={f} {...extra} />;
const hall = () => {
  let d = '';
  [478, 568, 655, 745, 832, 922, 1009, 1099, 1187].forEach((x) =>
    [67, 154, 244, 331, 421, 508, 598, 685, 775, 862, 952, 1039, 1126, 1216, 1303, 1393, 1480, 1570, 1657].forEach((y) => {
      d += `M${x} ${y - 64}V${y}H${x + 64}`;
    })
  );
  return d;
};
const balcony = () => {
  let d = '';
  [687, 745, 802, 862, 922, 979, 1039, 1099, 1156, 1216].forEach((x) =>
    [847, 907, 964, 1024, 1082].forEach((y) => { d += `M${x} ${y - 44}V${y}H${x + 43}`; })
  );
  return d;
};
const bath = () => {
  let d = '';
  for (let i = -1; i < 12; i++) for (let j = 0; j < 12; j++) {
    const x = Math.round(96 + i * 29.6), y = Math.round(80 + j * 29.6);
    d += `M${x} ${y - 22}V${y}H${x + 23}`;
  }
  return d;
};
const Room = ({ x, y, w = 87, children }) => (
  <g>
    <rect x={x} y={y} width={w} height="49" fill="#212830" />
    <text x={x + w / 2} y={y + 38} fill="#fff" fontSize="37" textAnchor="middle" fontFamily={UI} textLength={w - 13}>{children}</text>
  </g>
);
const Plan = () => (
  <svg width="1813" height="748" viewBox="41 160 1813 748" shapeRendering="crispEdges">
    <defs>
      <clipPath id="hallc"><path d="M684 27H1260V1637H684V1116H465V906H684z" /></clipPath>
      <clipPath id="balc"><path d="M687 822h573v260H687z" /></clipPath>
      <clipPath id="batc"><path d="M75 69H465V228H438V411H75z" /></clipPath>
    </defs>
    <path d="M335.500 160V908M1085.500 160V908" stroke="#0a35f0" />
    <g transform="translate(500 200) scale(.33333333)">
      <path d="M684 27H1260V1637H650V1116H462V906H684z" fill="#d9d9d9" />
      <path d={hall()} stroke="#999" strokeWidth="3" fill="none" clipPath="url(#hallc)" />
      {R(1233, 66, 1239, 234, '#ccc')}
      <path d="M1239 27H1302V1674H1260V66H1239z" fill="#80662f" />
      <path d="M519 27H1044V66H1011V525H684V909H642V413H186V375H519z" fill="#ffffdf" />
      {R(519, 180, 522, 255, '#212830')}
      <path d="M559 369V64H983V178" fill="none" stroke="#000" strokeWidth="3" />
      {R(657, 105, 780, 156, '#000')}
      <circle cx="693" cy="130" r="15" fill="#ffffdf" /><circle cx="749" cy="130" r="15" fill="#ffffdf" />
      {R(642, 177, 984, 372, '#f5f0bb')}
      <path d="M642 184H984M642 271H984M642 358H984M694 177V184M865 177V184M778 184V271M952 184V271M694 271V358M865 271V358M778 358V372M952 358V372" stroke="#fff" strokeWidth="3" />
      {R(852, 372, 984, 498, '#f5f0bb')}
      {R(645, 372, 855, 430, '#ffffdf')}
      <path d="M852 442H984M865 442V498" stroke="#fff" strokeWidth="3" />
      {R(873, 369, 969, 486, '#fff')}
      <path d="M890 313L898 300 980 353 972 367z" fill="#fff" />
      {R(681, 393, 831, 525, '#80662f')}
      {R(225, 413, 642, 906, '#d0bb7a')}
      {R(558, 369, 645, 414, '#80662f')}
      {R(225, 414, 474, 621, '#ff80c0')}
      {R(231, 444, 276, 514, '#d0bb7a')}
      {R(229, 514, 278, 586, '#d0bb7a', { stroke: '#000', strokeWidth: 3 })}
      {R(186, 413, 225, 543, '#ffffdf')}
      {R(78, 519, 188, 872, '#ffffdf')}
      {R(188, 543, 226, 772, '#d0bb7a')}
      {R(188, 774, 226, 900, '#ffffdf')}
      <path d="M78 520H186M226 774V840M187 774V871H52V1105" stroke="#000" strokeWidth="3" fill="none" />
      <path d="M86 873V526H186M188 543V772H226V690M214 543V772M226 543V621" stroke="#0ff" strokeWidth="3" fill="none" />
      <path d="M97 873V538H189" stroke="#e0ffc0" strokeWidth="9" fill="none" />
      {R(227, 621, 281, 688, '#80703f', { stroke: '#000', strokeWidth: 3 })}
      <circle cx="255" cy="657" r="9" fill="#ff0" />
      {R(225, 840, 465, 882, '#665522')}
      <path d="M465 886H484M485 906C484 800 530 740 630 730" fill="none" stroke="#000" strokeWidth="3" />
      {R(678, 588, 927, 612, '#5c4f28')}
      {R(678, 621, 936, 906, '#d6cd69')}
      <path d="M680 588V612M680 621V906" stroke="#000" strokeWidth="3" />
      <path d="M680 634H736M680 658H936M736 621V906M865 621V906M680 784H936M757 621V658M778 621V658M802 621V658M823 621V658M844 621V658M865 634H936M694 658V784M715 658V784M886 658V784M907 658V784M928 658V784M736 679H865M736 700H865M736 721H865M736 742H865M736 763H865M757 784V906M778 784V906M802 784V906M823 784V906M844 784V906M680 808H736M680 829H736M680 850H736M680 871H736M680 892H736M865 808H936M865 829H936M865 850H936M865 871H936M865 892H936" stroke="#5c4f28" strokeWidth="3" />
      {R(958, 637, 983, 895, '#5c4f28', { stroke: '#000', strokeWidth: 3 })}
      {R(694, 925, 911, 943, '#5c4f28', { stroke: '#000', strokeWidth: 3 })}
      <Room x={831} y={219}>厨房</Room>
      <Room x={306} y={623}>卧室</Room>
      <Room x={1002} y={773}>餐厅</Room>
      <g transform="translate(0 840)">
        <path d="M54 33H200V42H465V93H438V69H92V144H87V258H75V387H51V261H54z" fill="#ffffdf" />
        <path d="M92 69H438V93H465V228H438V411H90V387H75V258H87V144H92z" fill="#8fd6fa" />
        <path d={bath()} stroke="#dcdcdc" strokeWidth="3" fill="none" clipPath="url(#batc)" />
        <path d="M54 69H92V144H87V258H75V261H54z" fill="#ffffdf" />
        {R(302, 78, 438, 93, '#aad0ee')}
        {R(93, 69, 192, 210, '#e0e0e0')}
        {R(438, 42, 465, 93, '#ffffdf')}
        <ellipse cx="144" cy="144" rx="36" ry="48" fill="#e2e2e2" stroke="#fff" strokeWidth="8" />
        <path d="M164 112L172 126 178 146 174 164M116 156v2M130 182l6 2" stroke="#000" strokeWidth="3" strokeDasharray="3 9" fill="none" />
        <circle cx="305" cy="311" r="37" fill="#fff" />{R(276, 320, 333, 396, '#fff')}
        {R(91, 301, 221, 407, 'none', { stroke: '#fff', strokeWidth: 3 })}
        <path d="M438 228H462V435H90V411H438z" fill="#ffffdf" />
        <path d="M462 276H650V1086H87V435H462z" fill="#d9ca92" />
        <path d="M648 276H690V682H687V1083H651V453H648z" fill="#ffffdf" />
        <path d="M51 387H90V435H87V1086H651V1083H687V1125H48V735H51z" fill="#80662f" />
        {R(87, 435, 432, 519, '#665522')}
        {R(96, 681, 168, 894, '#665522')}
        <circle cx="126" cy="582" r="15" fill="#ff0" /><circle cx="126" cy="1008" r="15" fill="#ff0" />
        <path d="M444 723C495 745 531 810 531 862C531 950 460 1025 375 1025C310 1025 255 990 231 939H444z" fill="#a08a37" />
        {R(147, 1125, 594, 1236, '#ffffdf')}
        <path d="M156 1225H576M147 1235H594M615 1123H924" stroke="#000" strokeWidth="3" />
        {R(189, 1083, 549, 1203, '#665522')}
        {R(687, 822, 1260, 1083, '#f5f0bb')}
        <path d={balcony()} stroke="#999" strokeWidth="3" fill="none" clipPath="url(#balc)" />
        <path d="M1260 834H1302V1122H687V1083H1260z" fill="#ffffdf" />
        {R(687, 798, 1260, 822, '#6f571c')}{R(762, 795, 1182, 825, '#75591c')}
        {R(987, 297, 1263, 720, '#ff0')}
        <path d="M1209 384H1260V585H1209zM1113 420H1176V609H1113zM1102 333l28-27 22 26-28 27zM1107 650l32-32 25 26-32 31z" fill="#edffbd" />
        <path d="M1209 484H1260M1139 342l9-9" stroke="#000" strokeWidth="3" />
        <path d="M856 938l33-30 28 27-36 33zM1031 918l34-20 23 42-29 18z" fill="#edffbd" stroke="#000" strokeWidth="3" />
        <circle cx="981" cy="931" r="27" fill="none" stroke="#000" strokeWidth="27" />
        <circle cx="981" cy="931" r="26" fill="#f5f0bb" stroke="#12c697" strokeWidth="22" />
        <path d="M979 916V946" stroke="#999" strokeWidth="3" />
        <Room x={801} y={481}>客厅</Room>
        <Room x={291} y={553} w={126}>主卧室</Room>
        <Room x={1101} y={1003}>阳台</Room>
      </g>
      <path d="M885 958H1404M1144 699V1218M1117 931H1172V986H1117z" stroke="#fff" strokeWidth="3" fill="none" />
    </g>
    <path d="M57.500 885.500h7v7h-7zM60.500 889V839M61 889.500H111M115 875l12 12M127 875l-12 12M62 822l6 7 6-7M68 829v6" stroke="#e6e6e6" fill="none" />
  </svg>
);

/* ---------- taskbar art ---------- */
const bird = <path d="M3 9c5 1 8 3 10 5 1-5 6-9 12-9-2 2-2 3-2 5l4 1-4 2c0 6-4 8-6 9l1 4c-4-2-5-3-6-5-3 1-5 0-6-1 3-1 4-2 4-3-4-1-6-4-7-8z" fill="#fff" />;
const penguin = (
  <>
    <ellipse cx="15" cy="27" rx="10" ry="3" fill="#f5a623" />
    <path d="M15 0c6 0 8 4 8 10 3 4 5 9 4 13l-3-2c-1 5-4 7-9 7s-8-2-9-7l-3 2c-1-4 1-9 4-13C7 4 9 0 15 0z" fill="#111" />
    <ellipse cx="15" cy="21" rx="7" ry="7" fill="#fff" />
    <path d="M7 12c5 3 11 3 16 0v4c-5 3-11 3-13 2v5H7z" fill="#e3231b" />
    <circle cx="12" cy="6" r="2" fill="#fff" /><circle cx="18" cy="6" r="2" fill="#fff" />
    <ellipse cx="15" cy="10" rx="5" ry="1.800" fill="#f5a623" />
  </>
);
const APPS = [
  { a: <><path d="M0 1h14v13H0zM15.500 1H29v13H15.500zM0 16h14v13H0zM15.500 16H29v13H15.500z" fill="#1583d8" /><path d="M0 1h14v13H0z" fill="#3fb8fa" /><path d="M15.500 1H29v13H15.500zM0 16h14v13H0z" fill="#279fea" /></> },
  { a: <><circle cx="15" cy="15" r="15" fill="#fbbc05" /><path d="M15 15L2 7.500A15 15 0 0128 7.500z" fill="#e33b2e" /><path d="M15 15L2 7.500A15 15 0 0014 30l7-12z" fill="#2a9d4a" /><circle cx="15" cy="15" r="7" fill="#fff" /><circle cx="15" cy="15" r="5.500" fill="#3b7ded" /></> },
  { d: 1, a: <><circle cx="15" cy="15" r="15" fill="#1278c8" /><path d="M1 10C7-4 29-3 30 13c0 6-8 8-11 5 3-6-7-13-18-8z" fill="#3bc8c0" /><path d="M21 2c6 2 9 7 9 11 0 6-8 8-11 5 3-4 4-9 2-16z" fill="#5bdc78" /><path d="M12 14c-3 7 4 14 16 10-3 5-9 7-14 6C5 26 5 16 12 14z" fill="#0c4f9e" /></> },
  { d: 1, a: <><path d="M1 3h10l3 3h15v22H1z" fill="#e8a50f" /><path d="M1 8h28v20H1z" fill="#ffd04d" /><path d="M6 21h18v8H6z" fill="#2f8fdc" /><path d="M10 24h10" stroke="#165a9c" strokeWidth="2" /></> },
  { a: <><path d="M9 6V2h12v4" fill="none" stroke="#26a5e8" strokeWidth="2" /><path d="M1 6h28v20l-2 3H3l-2-3z" fill="#194f85" /><path d="M9 11h5v5H9z" fill="#f25022" /><path d="M16 11h5v5h-5z" fill="#7fba00" /><path d="M9 18h5v5H9z" fill="#00a4ef" /><path d="M16 18h5v5h-5z" fill="#ffb900" /></> },
  { a: <><path d="M4 8L17 0l3 1v6l-9 3v12l-5 3-2-3z" fill="#a82a1c" /><path d="M17 0l9 3v23l-9 4-9-5 10-1V6z" fill="#e8590c" /></> },
  { a: <><rect width="30" height="30" rx="6" fill="#dd001b" /><path d="M20 6c-4-2-6 1-5 4l2 8c0 4-5 3-4-1 1-4 8-5 10 0 1 4-3 8-8 8-8 0-9-11-2-14" fill="none" stroke="#fff" strokeWidth="2.400" /></> },
  { a: penguin },
  { a: <><ellipse cx="12" cy="12" rx="11" ry="10" fill="#1fd066" /><circle cx="8" cy="9" r="1.500" fill="#143" /><circle cx="15" cy="9" r="1.500" fill="#143" /><ellipse cx="21" cy="19" rx="9" ry="8" fill="#ececec" /><circle cx="18" cy="17" r="1.200" fill="#777" /><circle cx="24" cy="17" r="1.200" fill="#777" /></> },
  { a: <><path d="M2 0h26v30H6l-4-4z" fill="#37a5cc" /><path d="M4 21h24v9H4z" fill="#1d5567" /><text x="15" y="17" fill="#fff" fontSize="18" fontWeight="bold" textAnchor="middle" fontFamily={UI}>3</text><text x="16" y="28.500" fill="#fff" fontSize="7.500" fontWeight="bold" textAnchor="middle" fontFamily={UI}>MAX</text></> },
  { a: <><path d="M4 4l18 20V30L8 19l-4 4-4-3V8z" fill="#7a4fbb" /><path d="M0 20L22 0v8L4 24z" fill="#9867d6" /><path d="M22 0l8 4v22l-8 4z" fill="#c08cf5" /><path d="M22 10v10l-6-5zM3 11l4 4-4 4z" fill="#ecdcd4" /></> },
  { a: <><rect x="1" y="1" width="28" height="28" rx="4" fill="#0a6cff" /><path d="M3 20c2-8 6-12 9-7l1 2c3-5 6-5 8-1 2 1 4 3 5 6H15l-2-3-2 3z" fill="#fff" /></> },
  { a: <><circle cx="15" cy="15" r="15" fill="#7184ee" /><path d="M21 9c-5-5-14-2-14 6s10 11 15 5" fill="none" stroke="#fff" strokeWidth="3.500" /><path d="M21 9c3 3 3 7 1 11" fill="none" stroke="#b9c4fb" strokeWidth="3" /></> },
  { a: <><rect width="30" height="30" rx="6" fill="#1a82ff" /><circle cx="15" cy="15" r="12" fill="none" stroke="#fff" strokeWidth="1.500" /><path d="M11 8v14M20 8l-8 7 8 7" fill="none" stroke="#fff" strokeWidth="3" /></> },
  { a: <><circle cx="15" cy="15" r="15" fill="#1590ff" /><path d="M24 6c-8-1-9 3-10 8s-2 8-6 11c5-1 7-4 8-8h4l2-3h-5c1-5 2-6 7-8z" fill="#fff" stroke="#fff" /></> },
  { a: <><circle cx="15" cy="15" r="15" fill="#12304f" /><circle cx="20" cy="11" r="5" fill="none" stroke="#fff" strokeWidth="2.500" /><path d="M0 16l9 4 8-7 4 4-7 7c-2 4-8 3-8-1l-6-2z" fill="#fff" /></> },
  { on: 1, a: <><defs><linearGradient id="acad" x1="0" x2="1" y1="0" y2=".6"><stop offset="0" stopColor="#e43a34" /><stop offset=".6" stopColor="#e8635c" /><stop offset="1" stopColor="#fbe2e0" /></linearGradient></defs><rect width="30" height="30" fill="url(#acad)" /><path d="M15 3l8 19-5-3h-6l-5 3z" fill="#8c120c" /><path d="M15 3L7 22l5-5z" fill="#c9301f" /></> },
  { a: <><rect width="30" height="30" rx="4" fill="#3d86ff" />{bird}</> },
];

/* ---------- data ---------- */
const MENU = [['文件(F)', 75], ['编辑(E)', 75], ['视图(V)', 77], ['插入(I)', 71], ['格式(O)', 79], ['工具(T)', 76], ['绘图(D)', 78], ['标注(N)', 79], ['修改(M)', 82], ['参数(P)', 76], ['窗口(W)', 82], ['帮助(H)', 76]];
const LAYERS = [
  ['0', '#fff', '白', 1, '默认'],
  ['Defpoi...', '#fff', '白', 1, '默认'],
  ['标注', '#0ff', '青', 3, '0.30 毫...', 1],
  ['瓷砖', '#fff', '白', 1, '默认'],
  ['粗实线', '#fff', '白', 5, '0.50 毫...'],
  ['地缝', '#fff', '白', 1, '默认'],
  ['点', '#000', '250', 3, '0.30 毫...', 1],
  ['黑色', '#000', '250', 4, '0.40 毫...'],
  ['图层1', '#ff8000', '30', 1, '默认'],
  ['文字', '#fff', '白', 1, '0.25 毫...'],
  ['细实线', '#003cff', '160', 1, '0.25 毫...'],
];
const HEAD = [['状', 9], ['名称', 8], ['开', 8], ['冻...', 8], ['锁..', 8], ['颜色', 8], ['线型', 8], ['线宽', 8], ['透...', 8], ['打...', 8], ['打', 8], ['新', 7], ['说', 5]];

const LayerPalette = () => (
  <Palette>
    <PBody>
      <PHead>
        <span>当前图层: 黑色</span>
        <PSearch>搜索图层<Icon n="loupe" s={13} h={15} /></PSearch>
      </PHead>
      <PTools>
        <Gap $w={2} /><Icon n="layfilter" s={17} h={16} /><Gap $w={6} /><Icon n="laystate" s={17} h={15} />
        <Sep $l={5} $r={8} /><Icon n="layers" s={17} h={16} />
        <Gap $w={92} /><Icon n="laynew" s={17} h={14} /><Gap $w={6} /><Icon n="laynewvp" s={17} h={15} />
        <Gap $w={7} /><Icon n="del" s={15} /><Gap $w={8} /><Icon n="check" s={16} h={14} />
        <Gap /><Icon n="refresh" s={17} h={15} /><Gap $w={7} /><Icon n="wrench" s={16} h={15} /><Gap $w={5} />
      </PTools>
      <PMain>
        <Filters>
          <FHead $h={20} $b={1}><Icon n="layfilter" s={16} h={14} />过滤器<Dbl>«</Dbl></FHead>
          <Tree>
            <TreeRow><Box>−</Box><Gap $w={2} /><Icon n="stack" s={16} h={15} /><Picked>全部</Picked></TreeRow>
            <TreeRow $x={34}><Icon n="layfilter" s={17} h={15} />所有使用的图层</TreeRow>
          </Tree>
          <FScroll $h={22} $x={22} $b={1}><Thumb $w={107} /></FScroll>
          <FHead $h={22} $g={5}><Check />反转过滤器(I)<Dbl>«</Dbl></FHead>
        </Filters>
        <Grid>
          <HRow>{HEAD.map(([t, p], i) => <HCell key={i} $p={p} $split={i === 1}>{t}</HCell>)}</HRow>
          {LAYERS.map(([name, c, cn, lw, lt, frz], i) => (
            <LRow key={name} $hi={i === 0}>
              <LCell $p={2}><Icon n={name === '黑色' ? 'check' : 'layer'} s={16} h={14} /></LCell>
              <LCell $p={6} $split>{name}</LCell>
              <LCell $p={4}><Icon n="tbulb" s={15} h={15} /></LCell>
              <LCell $p={11}><Icon n="tsun" s={15} h={15} /></LCell>
              <LCell $p={7}><Icon n="lock" s={17} h={14} /></LCell>
              <LCell $p={3} $g={8}><Swatch $s={16} $c={c} />{cn}</LCell>
              <LCell $p={6}>Continu...</LCell>
              <LCell $p={2} $g={8}><Stroke $w={38} $h={lw} />{lt}</LCell>
              <LCell $p={6}>0</LCell>
              <LCell $p={6} $c="#888">Col...</LCell>
              <LCell $p={4}><Icon n="print" s={16} h={15} dim={i === 1} /></LCell>
              <LCell $p={4}><Icon n={frz ? 'vpfrz' : 'vpthaw'} s={15} h={15} /></LCell>
              <LCell />
            </LRow>
          ))}
          <Filler />
          <FScroll $h={21} $x={21}><Thumb $w={402} /></FScroll>
        </Grid>
      </PMain>
      <PFoot>全部: 显示了 11 个图层，共 11 个图层</PFoot>
    </PBody>
    <PSide>
      <svg width="10" height="9" stroke="#000" strokeWidth="2"><path d="M1 .500l8 8M9 .500l-8 8" /></svg>
      <svg width="12" height="11"><path d="M5 1v9L0 5.500zM6 1v9l4-4.500zM10 0h1.500v11H10z" /></svg>
      <svg width="12" height="11"><path d="M0 0h12v11H0z" /><path d="M2 4h5v1H2zM2 6h5v1H2zM2 8h5v1H2zM9 3h1v7H9z" fill="#ccc" /></svg>
      <VTitle>图层特性管理器</VTitle>
      <Icon n="stack" s={17} h={17} />
    </PSide>
  </Palette>
);

const drawTools = ['line', 'xline', 'pline', 'polygon', 'rect', 'arc', 'circle', 'cloud', 'spline', 'ellipse', 'earc', 'insblk', 'mkblk', 'point', 'hatch', 'grad', 'region', 'table', 'mtext', 'addsel'];
const modTools = ['erase', 'mcopy', 'mirror', 'offset', 'array', 'move', 'rotate', 'scale', 'stretch', 'trim', 'extend', 'brk', 'brk', 'join', 'chamfer', 'chamfer', 'blend', 'explode'];

export default function App() {
  return (
    <>
      <Global />
      <Desktop>
        <RedCorner />
        <Win>
          <Title>
            <Quick>
              {['new', 'open', 'save', 'saveas', 'print', 'undo'].map((n) => <Slot key={n} $w={30}><Icon n={n} s={20} h={18} /></Slot>)}
              <Slot $w={15}><Arrow $s={3.5} /></Slot>
              <Slot $w={28}><Icon n="redo" s={20} h={17} /></Slot>
              <Slot $w={19}><Arrow $s={3.5} /></Slot>
              <Workspace><Icon n="gear" s={20} />AutoCAD 经典<Gap /><Arrow $s={5} /></Workspace>
              <Slot $w={17}><svg width="10" height="9"><path d="M0 0h10v1.500H0zM0 3h10l-5 6z" /></svg></Slot>
            </Quick>
            <Caption $x={80} $w={206}>Autodesk AutoCAD 2014</Caption>
            <Caption $x={0} $w={319}>20220324039苏力星（室内）.dwg</Caption>
            <InfoBar>
              <Slot $w={17}><svg width="6" height="10"><path d="M0 0l6 5-6 5z" /></svg></Slot>
              <Search>键入关键字或短语</Search>
              <Slot $w={28}><Icon n="binoc" s={20} h={19} /></Slot>
              <Slot $w={30}><Icon n="user" s={20} h={19} /></Slot>
              <Login>登录</Login>
              <Slot $w={16}><Arrow $s={3.5} /></Slot>
              <Slot $w={32}><Icon n="xch" s={20} h={17} /></Slot>
              <Slot $w={28}><Icon n="a360" s={21} h={18} /></Slot>
              <Slot $w={14}><Arrow $s={3.5} /></Slot>
              <Slot $w={44}><Icon n="qhelp" s={21} h={21} /></Slot>
              <Slot $w={16}><Arrow $s={3.5} /></Slot>
            </InfoBar>
            <Caps>
              <svg width="12" height="14" stroke="#999"><path d="M0 9.500h12" /></svg>
              <svg width="13" height="14" stroke="#999" fill="none"><rect x=".500" y="2.500" width="11" height="11" /></svg>
              <svg width="14" height="14" stroke="#888"><path d="M1 2l12 12M13 2L1 14" /></svg>
            </Caps>
          </Title>
          <Menu>
            {MENU.map(([t, w]) => <MenuItem key={t} $w={w}>{t}</MenuItem>)}
            <Gap />
            <svg width="48" height="14" fill="none" stroke="#222" strokeWidth="1.500"><path d="M0 11h10" strokeWidth="2.500" /><path d="M16 5h7v8h-7zM19 5V1h7v8h-3" /><path d="M34 3l7 8M41 3l-7 8" strokeWidth="2.200" /></svg>
          </Menu>
          <Tabs>
            <FileTab w={169}>1*</FileTab>
            <FileTab w={171} p={24}>Drawing2*</FileTab>
            <FileTab w={238} p={23}>20220324039苏力星(1)*</FileTab>
            <FileTab w={280} p={21} on>
              20220324039苏力星（室内）*
              <svg width="11" height="10" stroke="#888" strokeWidth="2.500"><path d="M1 1l9 8M10 1L1 9" /></svg>
            </FileTab>
            <Gap $w={13} />
            <svg width="28" height="24"><path d="M1 6h14c8 0 11 6 11 16H10C4 21 1 14 1 6z" fill="#8d8d8d" stroke="#555" strokeWidth="1.500" /><path d="M14 10v8M10 14h8" stroke="#ccc" strokeWidth="2.600" /></svg>
          </Tabs>
          <ToolRows>
            <ToolRow>
              <Bar $w={646}>
                <Grip />
                {items(['new', 'open', 'save', '|', 'print', 'preview', 'publish', 'globe', '|', 'cut', 'copy', 'paste', 'match', 'blockedit', '|', 'undo', 'v', 'redo', 'v', '|', 'hand', 'zoomrt', 'zoomwin', 'zoomprev', '|', 'props', 'dc', 'palette', 'sheet', 'markup', 'calc', '|', 'help'])}
              </Bar>
              <Gap $w={1} />
              <Bar $w={700}>
                <Grip />
                <Slot $w={25}><Icon n="astyle" s={19} /></Slot>
                <Combo $w={119} $p={17} $fs={15.2}>Standard<Gap /><Chev /></Combo>
                <Sep /><Slot $w={24}><Icon n="dimstyle" s={18} /></Slot>
                <Combo $w={119} $p={17} $fs={15.2}>Standard<Gap /><Chev /></Combo>
                <Sep /><Slot $w={24}><Icon n="tablestyle" s={18} /></Slot>
                <Combo $w={119} $p={3} $fs={15.2}>Standard<Gap /><Chev /></Combo>
              </Bar>
            </ToolRow>
            <ToolRow>
              <Bar $w={230}>
                <Grip />
                <Combo $w={175} $p={9} $fs={15.6}>AutoCAD 经典<Gap /><Chev /></Combo>
                <Slot><Icon n="gear" s={17} /></Slot><Slot><Icon n="home" s={17} /></Slot>
              </Bar>
              <Gap $w={2} />
              <Bar $w={401}>
                <Grip />
                <Slot><Icon n="layers" s={18} h={17} /></Slot>
                <Combo $w={299} $p={1} $g={3}>
                  <Icon n="bulb" s={14} h={15} /><Icon n="sun" s={14} h={15} /><Icon n="vpfreeze" s={14} h={14} /><Icon n="lock" s={14} h={14} /><Swatch $s={11} /><Gap $w={-1} />黑色<Gap /><Chev />
                </Combo>
                <Slot><Icon n="laymake" s={18} h={17} /></Slot><Slot><Icon n="layprev" s={18} h={17} /></Slot><Slot><Icon n="layers" s={18} h={17} /></Slot>
              </Bar>
              <Gap $w={1} />
              <Bar $w={700}>
                <Grip />
                <Combo $w={150} $p={5} $g={4} $fs={16} $serif><Swatch $s={10} />ByLayer<Gap /><Chev /></Combo>
                <Sep $l={3} $r={3} />
                <Combo $w={160} $p={4} $fs={16} $serif><Stroke $w={60} $h={1} />ByLayer<Gap /><Chev /></Combo>
                <Sep $l={3} $r={3} />
                <Combo $w={160} $p={3} $fs={16} $serif><Stroke $w={35} $h={4} />ByLayer<Gap /><Chev /></Combo>
              </Bar>
            </ToolRow>
          </ToolRows>
          <Work>
            <LeftDock>
              <VBar $h={448}>
                <VGrip />
                {drawTools.map((n) => <VSlot key={n}><Icon n={n} s={16} /></VSlot>)}
              </VBar>
            </LeftDock>
            <Center>
              <CanvasRow>
                <Canvas>
                  <Plan />
                  <ViewLabel>[−][俯视][二维线框]</ViewLabel>
                  <FloatBar>
                    <Bar $w={649}>
                      <Grip />
                      {items(['dlin', 'dali', 'darc', 'dord', '|', 'drad', 'djog', 'ddia', 'dang', '|', 'dquick', 'dbase', 'dcont', 'dspace', 'dbreak', '|', 'dtol', 'dcenter', 'dinsp', 'djogl', '|', 'dedit', 'dtedit', 'dupd', '|'])}
                      <Combo $w={119} $p={17} $fs={15.2}>Standard<Gap /><Chev /></Combo>
                      <Slot $w={24}><Icon n="dimstyle" s={18} /></Slot>
                      <CloseNub>x</CloseNub>
                    </Bar>
                  </FloatBar>
                </Canvas>
                <VScroll />
              </CanvasRow>
              <LayoutTabs>
                <NavBtn><svg width="10" height="12" fill="#555"><path d="M0 0h1.500v12H0zM9 0v12L3 6z" /></svg></NavBtn>
                <NavBtn><svg width="10" height="12" fill="#555"><path d="M8 0v12L2 6z" /></svg></NavBtn>
                <NavBtn><svg width="10" height="12" fill="#555"><path d="M2 0v12l6-6z" /></svg></NavBtn>
                <NavBtn><svg width="10" height="12" fill="#555"><path d="M1 0v12l6-6zM8.500 0H10v12H8.500z" /></svg></NavBtn>
                <LTab $w={58}><svg width="58" height="18"><path d="M1 0h57l-6 18H6z" fill="#212830" /></svg><LText $p={16} $on>模型</LText></LTab>
                <LTab $w={66}><svg width="66" height="18" fill="none" stroke="#555"><path d="M5 17h52L64 0" /></svg><LText>布局1</LText></LTab>
                <LTab $w={66}><svg width="66" height="18" fill="none" stroke="#555"><path d="M0 14l2 3h52L61 0" /></svg><LText $p={13}>布局2</LText></LTab>
                <Splitter />
                <HThumb />
              </LayoutTabs>
            </Center>
            <RightDock>
              <VBar $h={404}>
                <VGrip />
                {modTools.map((n, i) => <VSlot key={i}><Icon n={n} s={16} /></VSlot>)}
              </VBar>
              <VBar $h={147}>
                <VGrip />
                {['front', 'back', 'above', 'under'].map((n) => <VSlot key={n}><Icon n={n} s={16} /></VSlot>)}
                <VSep />
                <VSlot><Icon n="abc" s={16} /></VSlot>
                <VSlot><Icon n="hatchback" s={16} /></VSlot>
              </VBar>
            </RightDock>
          </Work>
          <Command>
            <CmdGrip>
              <Dots />
              <svg width="10" height="10" stroke="#fff" strokeWidth="2.200"><path d="M1 1l8 8M9 1L1 9" /></svg>
              <svg width="10" height="8" stroke="#fff" strokeWidth="2" fill="none"><path d="M1 7h1M4 7c4 0 5-3 3-6" /></svg>
            </CmdGrip>
            <CmdBody>
              <CmdHist>命令:</CmdHist>
              <CmdInput><Prompt>&gt;_</Prompt><Arrow $s={4} $m={4} $c="#888" /><Gap $w={7} />键入命令</CmdInput>
            </CmdBody>
          </Command>
          <Status>
            <Coords>170.0484, 199.8718, 0.0000</Coords>
            {['infer', 'snap', 'grid', 'ortho', 'polar', 'osnap', 'osnap3d', 'otrack', 'ducs', 'dyn', 'lwt', 'tpy', 'qp', 'sc', 'am'].map((n, i) => (
              <SBtn key={n} $on={[5, 7, 8, 9, 11].includes(i)}><Icon n={n} s={16} /></SBtn>
            ))}
            <Gap />
            <SBtn $w={36}>模型</SBtn>
            <SBtn><Icon n="qview" s={16} h={16} /></SBtn>
            <SBtn><Icon n="qlay" s={16} h={16} /></SBtn>
            <SBtn $w={23} $dark />
            <SBtn $w={60}><Icon n="anno" s={15} /><Gap $w={4} />1:1<Arrow $s={4} $m={4} $c="#000" /></SBtn>
            <SBtn><Icon n="annovis" s={16} /></SBtn>
            <SBtn><Icon n="annoauto" s={16} /></SBtn>
            <SBtn $w={6} $dark />
            <SBtn><Icon n="gear" s={17} /></SBtn>
            <SBtn><Icon n="padlock" s={14} h={16} /></SBtn>
            <SBtn><Icon n="perf" s={15} /></SBtn>
            <SBtn $w={56} $dark><Inset><Icon n="iso" s={15} /><Icon n="bulb" s={14} /></Inset></SBtn>
            <SBtn $w={11}><Arrow $s={3} $c="#000" /></SBtn>
            <SBtn><Icon n="clean" s={15} /></SBtn>
            <SBtn $w={21} $dark><svg width="14" height="14" fill="#ddd"><path d="M10 1h2v2h-2zM10 5h2v2h-2zM10 9h2v2h-2zM6 5h2v2H6zM6 9h2v2H6zM2 9h2v2H2z" /></svg></SBtn>
          </Status>
          <AppButton>
            <svg width="24" height="28"><path d="M12 1L0 27h6l6-7 6 7h6z" fill="#c5281c" /><path d="M12 1l-5 19h10z" fill="#8f130b" /><path d="M12 1L0 27l9-10z" fill="#ee5a3c" /></svg>
            <Gap $w={2} /><Arrow $s={4} />
          </AppButton>
        </Win>
        <LayerPalette />
        <Gadget />
        <Taskbar>
          <Apps>
            {APPS.map((x, i) => (
              <AppSlot key={i}>
                <AppGlow $on={x.on}><svg width="30" height="30" viewBox="0 0 30 30">{x.a}</svg></AppGlow>
                {x.d && <Dot $w={7} $c="#8b817c" />}
                {x.on && <Dot $w={20} $c="#0f74d1" />}
              </AppSlot>
            ))}
          </Apps>
          <Tray>
            <TraySlot $w={31}><svg width="18" height="24" fill="none" stroke="#222" strokeWidth="1.500"><path d="M2 16l7-7 7 7" /></svg></TraySlot>
            <TraySlot $w={33}><svg width="17" height="20" viewBox="0 0 30 30" preserveAspectRatio="none">{penguin}</svg></TraySlot>
            <TraySlot $w={40}>中</TraySlot>
            <TraySlot $w={29}><svg width="20" height="24" fill="none" stroke="#222" strokeWidth="1.500"><path d="M1 9c5-5 13-5 18 0M4 12c4-4 8-4 12 0M7 15c2-2 4-2 6 0" /><circle cx="10" cy="18" r="1.300" fill="#222" /></svg></TraySlot>
            <TraySlot $w={31}><svg width="19" height="24" fill="none" stroke="#222" strokeWidth="1.300"><path d="M1 9h3l4-4v14l-4-4H1zM11 9c2 2 2 4 0 6M13 7c3 3 3 7 0 10" /></svg></TraySlot>
            <TraySlot $w={22}><svg width="20" height="24"><path d="M6 7h11v10H5v-4h-1V9H0V6h1V3h1v3h1V3h1v3h2zM18 10h2v4h-2z" fill="#1c1c1c" /></svg></TraySlot>
          </Tray>
          <Clock>20:28<br />2024/1/30</Clock>
          <Watermark>CSDN @2301_81836989</Watermark>
        </Taskbar>
      </Desktop>
    </>
  );
}
